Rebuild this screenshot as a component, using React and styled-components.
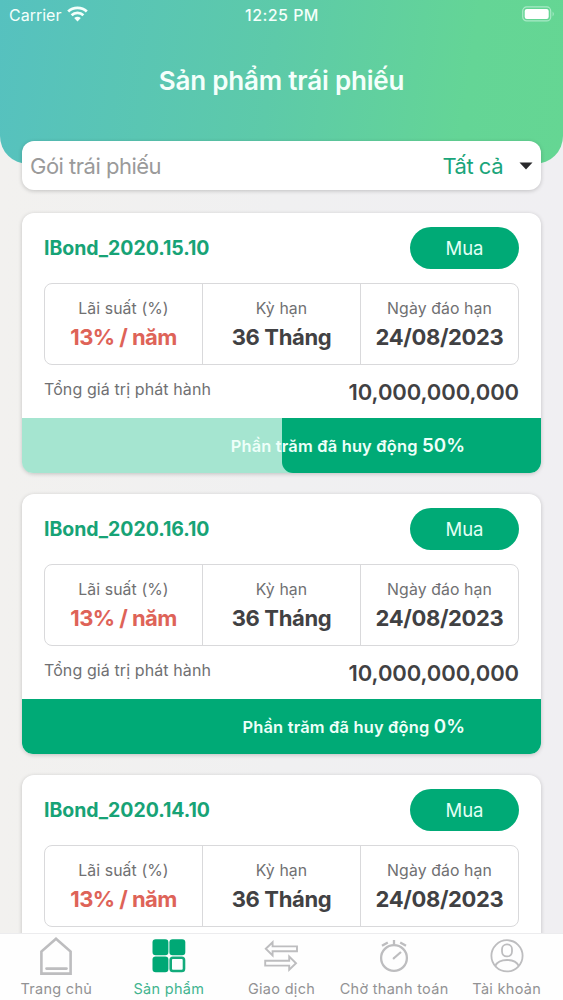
import React from "react";
import styled, { createGlobalStyle } from "styled-components";

const GlobalStyle = createGlobalStyle`
  * { box-sizing: border-box; }
  html, body { margin: 0; padding: 0; }
  body {
    width: 563px; height: 1000px; overflow: hidden; background: #f1f0f1;
    font-family: Inter, "Noto Sans", sans-serif;
  }
`;

const Screen = styled.div`
  display: flex; flex-direction: column;
  width: 563px; height: 1000px; overflow: hidden;
  background: linear-gradient(90deg, #f2f1ef, #f0f0f1 50%, #f0eff2);
`;

const Header = styled.header`
  flex: none; height: 164px;
  border-radius: 0 0 28px 28px;
  background: linear-gradient(98deg, #56c1bf 0%, #5dcaa9 48%, #64d596 82%, #65d693 100%);
`;

const StatusBar = styled.div`
  display: grid; grid-template-columns: 1fr auto 1fr; align-items: center;
  height: 28px; padding: 0 8px 0 9px; color: #f4fffb;
  font-size: 16px; line-height: 20px;
`;

const Carrier = styled.div`
  display: flex; align-items: center; gap: 6px; letter-spacing: 0; padding-top: 1px;
  svg { margin-top: -2px; }
`;

const Clock = styled.div`
  font-weight: 500; letter-spacing: 0.45px; font-size: 16px; padding-top: 1px;
`;

const Battery = styled.svg`
  justify-self: end; display: block;
`;

const Title = styled.h1`
  margin: 36px 0 0; text-align: center; color: #f4fffb;
  font-size: 26px; line-height: 34px; font-weight: 600; letter-spacing: -0.2px;
`;

const Content = styled.main`
  flex: 1; min-height: 0; overflow: hidden;
  margin-top: -28px; padding: 5px 22px 0;
  display: flex; flex-direction: column;
`;

const Filter = styled.div`
  flex: none; display: flex; align-items: center;
  height: 49px; padding: 0 8px; border-radius: 12px; background: #fff;
  box-shadow: 0 1px 4px rgba(0, 0, 0, 0.2);
  font-size: 22px; color: #9a9a9a; letter-spacing: -0.5px;
`;

const FilterValue = styled.span`
  margin-left: auto; margin-right: 16px; color: #1aa57a;
`;

const CardList = styled.div`
  display: flex; flex-direction: column; gap: 21.5px; margin-top: 23px;
`;

const Card = styled.article`
  flex: none; height: 259.5px; border-radius: 12px; background: #fff;
  box-shadow: 0 1px 4px rgba(0, 0, 0, 0.2);
  display: flex; flex-direction: column;
`;

const CardHead = styled.div`
  display: flex; justify-content: space-between; align-items: center;
  height: 42px; margin: 14px 22px 14px;
`;

const BondName = styled.h2`
  margin: 0; color: #17a376; font-size: 19.5px; line-height: 26px; font-weight: 700;
  letter-spacing: -0.05px;
`;

const BuyButton = styled.button`
  width: 109px; height: 42px; border: 0; border-radius: 21px; padding: 1px 0 0;
  background: #00aa76; color: #e2fff5; font: 400 18.5px/41px Inter, "Noto Sans", sans-serif;
`;

const Facts = styled.div`
  display: grid; grid-template-columns: 157px 158px 1fr;
  height: 82px; margin: 0 22px; border: 1px solid #d9d9db; border-radius: 8px;
`;

const Fact = styled.div`
  padding-top: 13px; text-align: center;
  & + & { border-left: 1px solid #d9d9db; }
`;

const FactLabel = styled.div`
  font-size: 15.8px; line-height: 24px; color: #707072; letter-spacing: 0.1px;
`;

const FactValue = styled.div`
  margin-top: 2px; font-size: 22px; line-height: 28px; font-weight: 700;
  color: ${(p) => (p.$accent ? "#de6358" : "#414143")};
  letter-spacing: ${(p) => (p.$accent ? "-0.55px" : "-0.35px")};
`;

const Total = styled.div`
  display: flex; justify-content: space-between; height: 53px; margin: 0 22px;
`;

const TotalLabel = styled.span`
  padding-top: 12px; font-size: 16px; line-height: 24px; color: #707072; letter-spacing: 0.1px;
`;

const TotalValue = styled.span`
  padding-top: 13px; font-size: 22px; line-height: 28px; font-weight: 600; color: #414143;
  letter-spacing: -0.1px;
`;

const Progress = styled.div`
  display: grid; flex: 1; border-radius: 0 0 11px 11px; overflow: hidden; background: #a5e5d0;
  & > * { grid-area: 1 / 1; }
`;

const Remaining = styled.div`
  justify-self: end; background: #00aa76; border-radius: 0 0 11px 11px;
`;

const ProgressText = styled.div`
  z-index: 1; justify-self: end; align-self: center; padding: 2px 76px 0 0;
  color: #eefff9; font-size: 16.4px; line-height: 24px; font-weight: 600; letter-spacing: 0.2px;
`;

const Percent = styled.span`
  font-size: 18.8px; letter-spacing: 0;
`;

const Nav = styled.nav`
  flex: none; display: grid; grid-template-columns: repeat(5, 1fr);
  height: 67px; background: #fefefe; border-top: 1px solid #ececee;
  position: relative;
`;

const NavItem = styled.div`
  display: flex; flex-direction: column; align-items: center;
  color: ${(p) => (p.$active ? "#42b48f" : "#929294")};
  font-size: 14.5px; line-height: 20px; letter-spacing: 0.3px; white-space: nowrap;
  svg { display: block; margin: 2px 0 3px; }
`;

const WifiIcon = () => (
  <svg width="21" height="16" viewBox="0 0 21 16" fill="none" stroke="#f4fffb" strokeWidth="2.8">
    <path d="M1.2 5.4C6.3.6 14.7.6 19.8 5.4" />
    <path d="M4.6 9.2C7.8 6.2 13.2 6.2 16.4 9.2" />
    <path d="M7.2 12.1Q10.5 9.4 13.8 12.1L10.5 15.4Z" fill="#f4fffb" stroke="none" />
  </svg>
);

const HomeIcon = () => (
  <svg width="38" height="40" viewBox="0 0 38 40" fill="none" stroke="#bdbdbf" strokeWidth="2.6">
    <path d="M4.4 37.6V15.5L19 2.8L33.6 15.5V37.6Z" />
    <path d="M9.5 32.6H29.5" strokeLinecap="round" />
  </svg>
);

const GridIcon = () => (
  <svg width="38" height="40" viewBox="0 0 38 40" fill="#00a875">
    <rect x="2.5" y="3.3" width="15.9" height="15.9" rx="3.2" />
    <rect x="19.4" y="3.3" width="15.9" height="15.9" rx="3.2" />
    <rect x="2.5" y="20.4" width="15.9" height="15.9" rx="3.2" />
    <rect x="20.7" y="21.7" width="13.3" height="13.3" rx="2.2" fill="none" stroke="#12ab7b" strokeWidth="2.6" />
  </svg>
);

const SwapIcon = () => (
  <svg width="38" height="40" viewBox="0 0 38 40" fill="none" stroke="#bdbdbf" strokeWidth="1.9">
    <path d="M3.8 12.8L10.6 6.2V10.4H35V15.2H10.6V19.4Z" />
    <path d="M34 27.2L27.2 20.6V24.8H3.2V29.6H27.2V33.8Z" />
  </svg>
);

const TimerIcon = () => (
  <svg width="38" height="40" viewBox="0 0 38 40" fill="none" stroke="#bdbdbf" strokeWidth="2.3">
    <circle cx="19" cy="22" r="12.9" />
    <path d="M19 9V4M7 9.8L12.8 6.4M25.2 6.4L31 9.8" />
    <path d="M18.5 22.5L26 16" />
    <circle cx="18.6" cy="22.4" r="1" fill="#bdbdbf" stroke="none" />
  </svg>
);

const UserIcon = () => (
  <svg width="38" height="40" viewBox="0 0 38 40" fill="none" stroke="#bdbdbf" strokeWidth="1.8">
    <circle cx="19" cy="19.8" r="15.6" />
    <rect x="14" y="8.4" width="10" height="12" rx="4.8" />
    <path d="M7.2 30C11 22 27 22 30.8 30" />
  </svg>
);

const bonds = [
  { name: "IBond_2020.15.10", raised: 50 },
  { name: "IBond_2020.16.10", raised: 0 },
  { name: "IBond_2020.14.10", raised: 0 },
];

const tabs = [
  { label: "Trang chủ", Icon: HomeIcon },
  { label: "Sản phẩm", Icon: GridIcon, active: true },
  { label: "Giao dịch", Icon: SwapIcon },
  { label: "Chờ thanh toán", Icon: TimerIcon },
  { label: "Tài khoản", Icon: UserIcon },
];

function BondCard({ name, raised }) {
  return (
    <Card>
      <CardHead>
        <BondName>{name}</BondName>
        <BuyButton>Mua</BuyButton>
      </CardHead>
      <Facts>
        <Fact>
          <FactLabel>Lãi suất (%)</FactLabel>
          <FactValue $accent>13% / năm</FactValue>
        </Fact>
        <Fact>
          <FactLabel>Kỳ hạn</FactLabel>
          <FactValue>36 Tháng</FactValue>
        </Fact>
        <Fact>
          <FactLabel>Ngày đáo hạn</FactLabel>
          <FactValue>24/08/2023</FactValue>
        </Fact>
      </Facts>
      <Total>
        <TotalLabel>Tổng giá trị phát hành</TotalLabel>
        <TotalValue>10,000,000,000</TotalValue>
      </Total>
      <Progress>
        <Remaining style={{ width: `${100 - raised}%` }} />
        <ProgressText>
          Phần trăm đã huy động <Percent>{raised}%</Percent>
        </ProgressText>
      </Progress>
    </Card>
  );
}

export default function App() {
  return (
    <>
      <GlobalStyle />
      <Screen>
        <Header>
          <StatusBar>
            <Carrier>
              Carrier <WifiIcon />
            </Carrier>
            <Clock>12:25 PM</Clock>
            <Battery width="33" height="16" viewBox="0 0 33 16">
              <rect x="0.7" y="0.9" width="28" height="14" rx="4" fill="none" stroke="#a8e9c6" strokeWidth="1.2" />
              <rect x="2.7" y="2.9" width="24" height="10" rx="2.2" fill="#fff" />
              <path d="M30.6 5.5Q33 8 30.6 10.5Z" fill="#a8e9c6" />
            </Battery>
          </StatusBar>
          <Title>Sản phẩm trái phiếu</Title>
        </Header>
        <Content>
          <Filter>
            Gói trái phiếu
            <FilterValue>Tất cả</FilterValue>
            <svg width="14" height="8" viewBox="0 0 14 8">
              <path d="M0.5 0.5H13.5L7 7.5Z" fill="#29292b" />
            </svg>
          </Filter>
          <CardList>
            {bonds.map((b) => (
              <BondCard key={b.name} {...b} />
            ))}
          </CardList>
        </Content>
        <Nav>
          {tabs.map(({ label, Icon, active }) => (
            <NavItem key={label} $active={active}>
              <Icon />
              {label}
            </NavItem>
          ))}
        </Nav>
      </Screen>
    </>
  );
}
